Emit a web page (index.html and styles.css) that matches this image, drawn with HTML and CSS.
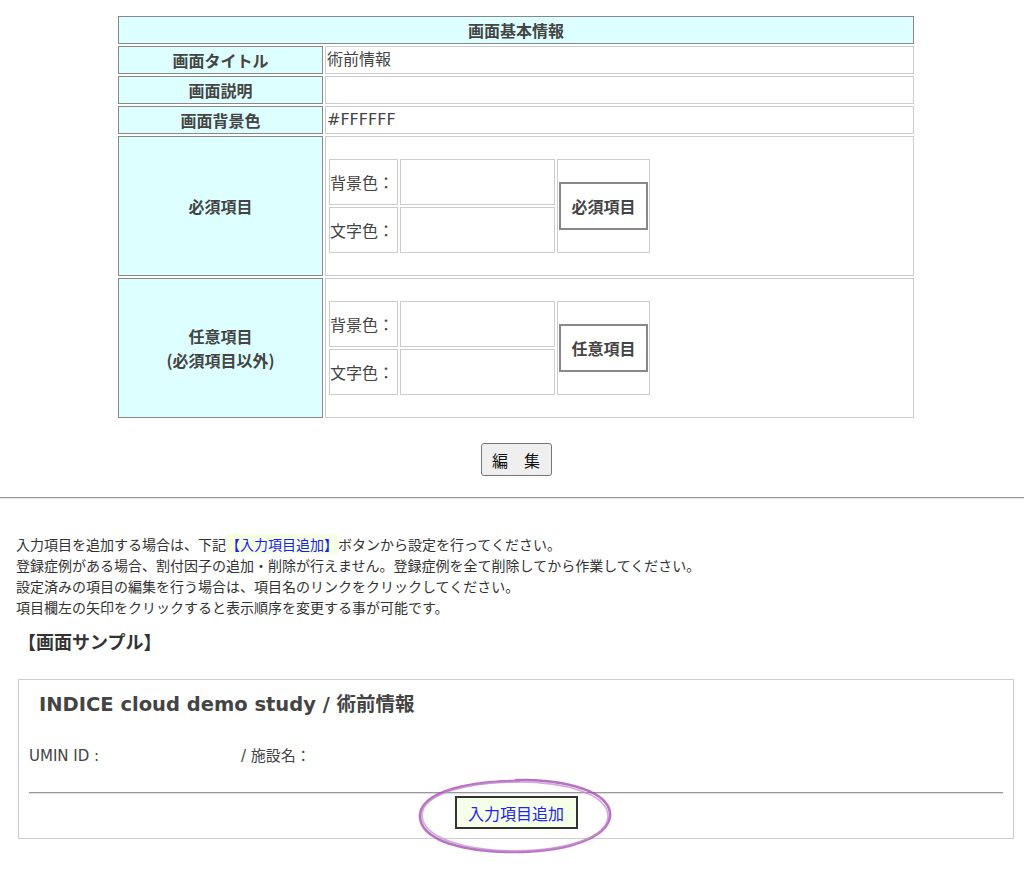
FILE: index.html
```
<!DOCTYPE html>
<html lang="ja">
<head>
    <meta charset="UTF-8">
    <title>画面基本情報</title>
    <link rel="stylesheet" href="styles.css">
</head>
<body>
    <div class="main">
        <table class="info-table">
            <tr>
                <th colspan="2" class="head">画面基本情報</th>
            </tr>
            <tr>
                <th>画面タイトル</th>
                <td>術前情報</td>
            </tr>
            <tr>
                <th>画面説明</th>
                <td></td>
            </tr>
            <tr>
                <th>画面背景色</th>
                <td>#FFFFFF</td>
            </tr>
            <tr class="big-row">
                <th>必須項目</th>
                <td>
                    <table class="color-table">
                        <tr>
                            <td class="color-label">背景色：</td>
                            <td class="color-value"></td>
                            <td rowspan="2" class="preview-cell">
                                <div class="preview">必須項目</div>
                            </td>
                        </tr>
                        <tr>
                            <td class="color-label">文字色：</td>
                            <td class="color-value"></td>
                        </tr>
                    </table>
                </td>
            </tr>
            <tr class="big-row">
                <th>任意項目<br>(必須項目以外)</th>
                <td>
                    <table class="color-table">
                        <tr>
                            <td class="color-label">背景色：</td>
                            <td class="color-value"></td>
                            <td rowspan="2" class="preview-cell">
                                <div class="preview">任意項目</div>
                            </td>
                        </tr>
                        <tr>
                            <td class="color-label">文字色：</td>
                            <td class="color-value"></td>
                        </tr>
                    </table>
                </td>
            </tr>
        </table>

        <div class="edit-row">
            <button class="edit-button">編　集</button>
        </div>
    </div>

    <hr class="divider">

    <div class="notes">
        <p>入力項目を追加する場合は、下記<span class="note-link">【入力項目追加】</span>ボタンから設定を行ってください。</p>
        <p>登録症例がある場合、割付因子の追加・削除が行えません。登録症例を全て削除してから作業してください。</p>
        <p>設定済みの項目の編集を行う場合は、項目名のリンクをクリックしてください。</p>
        <p>項目欄左の矢印をクリックすると表示順序を変更する事が可能です。</p>
    </div>

    <p class="sample-title">【画面サンプル】</p>

    <div class="sample-box">
        <p class="sample-heading">INDICE cloud demo study / 術前情報</p>
        <p class="sample-meta"><span class="umin">UMIN ID :</span>/ 施設名：</p>
        <hr class="sample-line">
        <div class="add-wrap">
            <button class="add-button">入力項目追加</button>
            <!-- hand drawn circle around the button -->
            <svg class="circle-mark" width="200" height="80" viewBox="0 0 200 80">
                <path d="M100 4 C150 3 196 16 194 40 C192 62 150 76 98 76 C46 76 4 64 4 40 C4 18 46 5 104 5" fill="none" stroke="#a64fb5" stroke-width="2.6" stroke-linecap="round" stroke-dasharray="6 1 3 1" opacity="0.8"/>
                <path d="M96 6 C148 5 193 18 192 41 C190 63 148 74 100 75 C50 75 6 62 6 39 C6 19 50 6 98 6" fill="none" stroke="#c590cf" stroke-width="1.8" opacity="0.75"/>
            </svg>
        </div>
    </div>
</body>
</html>
```

FILE: styles.css
```
body{
    margin: 0;
    padding-bottom: 40px;
    background-color: white;
    color: #333;
    font-family: "DejaVu Sans", "Noto Sans CJK JP", sans-serif;
}

p{
    margin: 0;
}

.main{
    padding: 14px 0 0 8px;
}

.info-table{
    width: 800px;
    margin: 0 auto;
    border-collapse: separate;
    border-spacing: 2px;
    font-size: 16px;
    line-height: 24px;
}
.info-table th{
    width: 201px;
    background-color: #ddffff;
    border: 1px solid #888;
    padding: 1px;
    font-weight: bold;
    color: #444;
    font-family: "Noto Sans CJK JP", sans-serif;
    font-size: 16px;
}
.info-table .head{
    width: auto;
}
.info-table td{
    border: 1px solid #ccc;
    padding: 1px;
    color: #444;
}
.big-row th,
.big-row > td{
    height: 136px;
}

.color-table{
    border-collapse: separate;
    border-spacing: 2px;
    line-height: 24px;
}
.color-table td{
    border: 1px solid #ccc;
    padding: 1px 0;
    height: 42px;
}
.color-label{
    width: 67px;
    font-family: "Noto Sans CJK JP", sans-serif;
}
.color-value{
    width: 153px;
}
.color-table .preview-cell{
    width: 89px;
    padding: 1px;
}
.preview{
    border: 2px solid #888;
    height: 44px;
    line-height: 44px;
    text-align: center;
    font-weight: bold;
    font-family: "Noto Sans CJK JP", sans-serif;
    font-size: 16px;
    color: #444;
}

.edit-row{
    text-align: center;
    margin-top: 23px;
}
.edit-button{
    font-family: "Noto Sans CJK JP", sans-serif;
    font-size: 16px;
    color: #111;
    background-color: #efefef;
    border: 1px solid #767676;
    border-radius: 3px;
    width: 71px;
    height: 33px;
    padding: 0;
}

.divider{
    margin: 21px 0 0 0;
    border: none;
    border-top: 1px solid #999;
    border-bottom: 1px solid #e8e8e8;
}

.notes{
    margin: 35px 0 0 16px;
    font-family: "Noto Sans CJK JP", sans-serif;
    font-size: 14px;
    line-height: 21px;
    color: #333;
}
.note-link{
    color: #1a1aff;
    background-color: #f4ffe4;
}

.sample-title{
    margin: 10px 0 0 18px;
    font-family: "Noto Sans CJK JP", sans-serif;
    font-size: 18px;
    line-height: 27px;
    font-weight: bold;
    color: #333;
}

.sample-box{
    margin: 24px 10px 0 18px;
    border: 1px solid #ccc;
    padding: 10px 0 9px 0;
}
.sample-heading{
    padding-left: 20px;
    font-size: 19.5px;
    line-height: 30px;
    font-weight: bold;
    color: #444;
}
.sample-meta{
    margin-top: 25px;
    padding-left: 10px;
    font-size: 15px;
    line-height: 22px;
    color: #444;
}
.umin{
    display: inline-block;
    width: 212px;
}
.sample-line{
    margin: 25px 10px 0 10px;
    border: none;
    border-top: 1px solid #999;
    border-bottom: 1px solid #ddd;
}

.add-wrap{
    position: relative;
    width: 123px;
    margin: 2px auto 0 auto;
}
.add-button{
    font-family: "Noto Sans CJK JP", sans-serif;
    font-size: 16px;
    color: #2222ff;
    background-color: #f6ffe8;
    border: 2px solid #333;
    width: 123px;
    height: 33px;
    padding: 0;
    display: block;
}
.circle-mark{
    position: absolute;
    display: block;
    left: -39px;
    top: -20px;
    pointer-events: none;
}
```
